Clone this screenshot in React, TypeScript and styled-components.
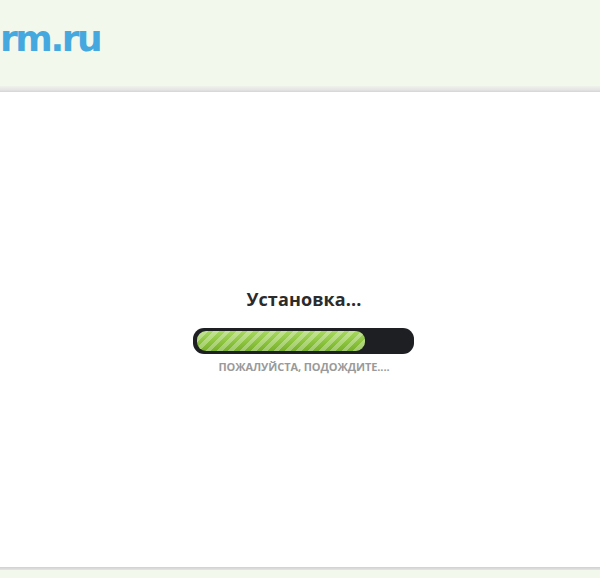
import styled, { createGlobalStyle } from 'styled-components'

const GlobalStyle = createGlobalStyle`
  html, body {
    margin: 0;
    padding: 0;
    height: 100%;
    background: #ffffff;
  }
  #root {
    height: 100%;
  }
`

const Page = styled.div`
  display: flex;
  flex-direction: column;
  height: 578px;
  overflow: hidden;
  font-family: 'Open Sans', 'DejaVu Sans', sans-serif;
`

const Header = styled.header`
  flex: 0 0 86px;
  display: flex;
  align-items: flex-start;
  background: #f3f8ed;
  overflow: hidden;
`

const HeaderEdge = styled.div`
  flex: 0 0 6px;
  background: linear-gradient(#eef2ea, #e6e6e6 60%, #d4d4d4);
`

const Logo = styled.div`
  margin: 18px 0 0 0;
  font-family: 'DejaVu Sans', Verdana, sans-serif;
  font-weight: 700;
  font-size: 36px;
  line-height: 42px;
  color: #45a9e0;
  letter-spacing: -2.4px;
`

const Main = styled.main`
  flex: 1;
  display: flex;
  flex-direction: column;
  align-items: center;
  justify-content: center;
  background: #ffffff;
  padding-top: 2px;
`

const Title = styled.h2`
  margin: 0 0 18px 8px;
  font-size: 18px;
  line-height: 22px;
  font-weight: 700;
  color: #2b2b2b;
  letter-spacing: 0.1px;
`

const Track = styled.div`
  box-sizing: border-box;
  width: 221px;
  height: 26px;
  margin-left: 7px;
  padding: 3px 4px;
  border-radius: 11px;
  background: #1d1f23;
`

const Fill = styled.div<{ $value: number }>`
  height: 100%;
  width: ${(p) => p.$value}%;
  border-radius: 9px;
  background:
    repeating-linear-gradient(
      135deg,
      rgba(255, 255, 255, 0) 0px,
      rgba(255, 255, 255, 0) 4px,
      rgba(255, 255, 255, 0.32) 4px,
      rgba(255, 255, 255, 0.32) 8px
    ),
    linear-gradient(#a8d862, #8cc43e 55%, #78b02c);
`

const Hint = styled.div`
  margin: 5px 0 0 8px;
  font-size: 11px;
  line-height: 15px;
  font-weight: 700;
  color: #9a9a9a;
  letter-spacing: -0.1px;
`

const FooterEdge = styled.div`
  flex: 0 0 3px;
  background: linear-gradient(#d0d0d0, #e4e4e4);
`

const Footer = styled.footer`
  flex: 0 0 8px;
  background: #f3f8ed;
`

export default function App() {
  return (
    <>
      <GlobalStyle />
      <Page>
        <Header>
          <Logo>rm.ru</Logo>
        </Header>
        <HeaderEdge />
        <Main>
          <Title>Установка...</Title>
          <Track>
            <Fill $value={79} />
          </Track>
          <Hint>ПОЖАЛУЙСТА, ПОДОЖДИТЕ....</Hint>
        </Main>
        <FooterEdge />
        <Footer />
      </Page>
    </>
  )
}
